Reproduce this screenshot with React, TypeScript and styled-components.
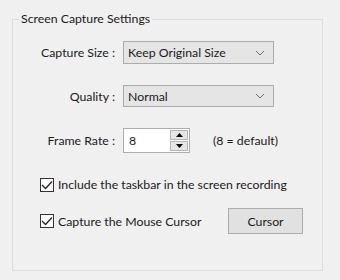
import React, { useState } from "react";
import styled, { createGlobalStyle } from "styled-components";

const GlobalStyle = createGlobalStyle`
  html, body {
    margin: 0;
    padding: 0;
    background: #f0f0f0;
  }
  body {
    font-family: Lato, "Noto Sans", Arial, sans-serif;
    font-size: 12.3px;
    color: #1a1a1a;
  }
`;

const Page = styled.div`
  width: 340px;
  height: 280px;
  box-sizing: border-box;
  padding: 11px 0 0 12px;
  background: #f0f0f0;
`;

const GroupBox = styled.fieldset`
  margin: 0;
  width: 311px;
  height: 260px;
  box-sizing: border-box;
  border: 1px solid #dcdcdc;
  padding: 0;
  min-width: 0;
`;

const Legend = styled.legend`
  margin-left: 6px;
  padding: 0 2px;
  line-height: 16px;
`;

const FieldRow = styled.div<{ $top: number }>`
  display: flex;
  align-items: center;
  margin-top: ${(p) => p.$top}px;
`;

const FieldLabel = styled.label`
  width: 102px;
  text-align: right;
  margin-right: 8px;
  white-space: nowrap;
`;

const Combo = styled.div<{ $h: number }>`
  width: 151px;
  height: ${(p) => p.$h}px;
  box-sizing: border-box;
  display: flex;
  align-items: center;
  justify-content: space-between;
  padding: 0 8px 0 4px;
  background: #e5e5e5;
  border: 1px solid #acacac;
`;

const SpinBox = styled.div`
  width: 67px;
  height: 25px;
  box-sizing: border-box;
  display: flex;
  align-items: center;
  justify-content: space-between;
  padding: 0 1px 0 5px;
  background: #fff;
  border: 1px solid #abadb3;
`;

const SpinButtons = styled.div`
  display: flex;
  flex-direction: column;
  gap: 1px;
`;

const SpinButton = styled.div`
  width: 18px;
  height: 10px;
  box-sizing: border-box;
  display: flex;
  align-items: center;
  justify-content: center;
  background: #e6e6e6;
  border: 1px solid #b4b4b4;
`;

const Hint = styled.span`
  margin-left: 23px;
`;

const CheckRow = styled.div<{ $top: number }>`
  display: flex;
  align-items: center;
  justify-content: space-between;
  margin: ${(p) => p.$top}px 19px 0 27px;
`;

const CheckLabel = styled.label`
  display: flex;
  align-items: center;
  gap: 4px;
  white-space: nowrap;
  cursor: default;
`;

const Box = styled.span`
  width: 14px;
  height: 14px;
  box-sizing: border-box;
  display: flex;
  align-items: center;
  justify-content: center;
  background: #fff;
  border: 1px solid #333;
`;

const PushButton = styled.button`
  width: 75px;
  height: 26px;
  box-sizing: border-box;
  font: inherit;
  color: #1a1a1a;
  background: #e1e1e1;
  border: 1px solid #adadad;
  padding: 0;
`;

const Chevron = () => (
  <svg width="10" height="6" viewBox="0 0 10 6">
    <path d="M1 1 L5 5 L9 1" fill="none" stroke="#707070" strokeWidth="1" />
  </svg>
);

const Arrow = ({ up }: { up: boolean }) => (
  <svg width="7" height="4" viewBox="0 0 7 4">
    <path d={up ? "M0 4 L3.5 0 L7 4 Z" : "M0 0 L3.5 4 L7 0 Z"} fill="#000" />
  </svg>
);

const Check = () => (
  <svg width="12" height="10" viewBox="0 0 12 10">
    <path d="M1 5 L4.5 8.5 L11 1.5" fill="none" stroke="#222" strokeWidth="1.3" />
  </svg>
);

const CheckItem = ({ text }: { text: string }) => (
  <CheckLabel>
    <Box>
      <Check />
    </Box>
    {text}
  </CheckLabel>
);

export default function App() {
  const [rate] = useState(8);
  return (
    <Page>
      <GlobalStyle />
      <GroupBox>
        <Legend>Screen Capture Settings</Legend>
        <FieldRow $top={14}>
          <FieldLabel>Capture Size :</FieldLabel>
          <Combo $h={23}>
            <span>Keep Original Size</span>
            <Chevron />
          </Combo>
        </FieldRow>
        <FieldRow $top={21}>
          <FieldLabel>Quality :</FieldLabel>
          <Combo $h={22}>
            <span>Normal</span>
            <Chevron />
          </Combo>
        </FieldRow>
        <FieldRow $top={21}>
          <FieldLabel>Frame Rate :</FieldLabel>
          <SpinBox>
            <span>{rate}</span>
            <SpinButtons>
              <SpinButton>
                <Arrow up />
              </SpinButton>
              <SpinButton>
                <Arrow up={false} />
              </SpinButton>
            </SpinButtons>
          </SpinBox>
          <Hint>(8 = default)</Hint>
        </FieldRow>
        <CheckRow $top={24}>
          <CheckItem text="Include the taskbar in the screen recording" />
        </CheckRow>
        <CheckRow $top={16}>
          <CheckItem text="Capture the Mouse Cursor" />
          <PushButton>Cursor</PushButton>
        </CheckRow>
      </GroupBox>
    </Page>
  );
}
